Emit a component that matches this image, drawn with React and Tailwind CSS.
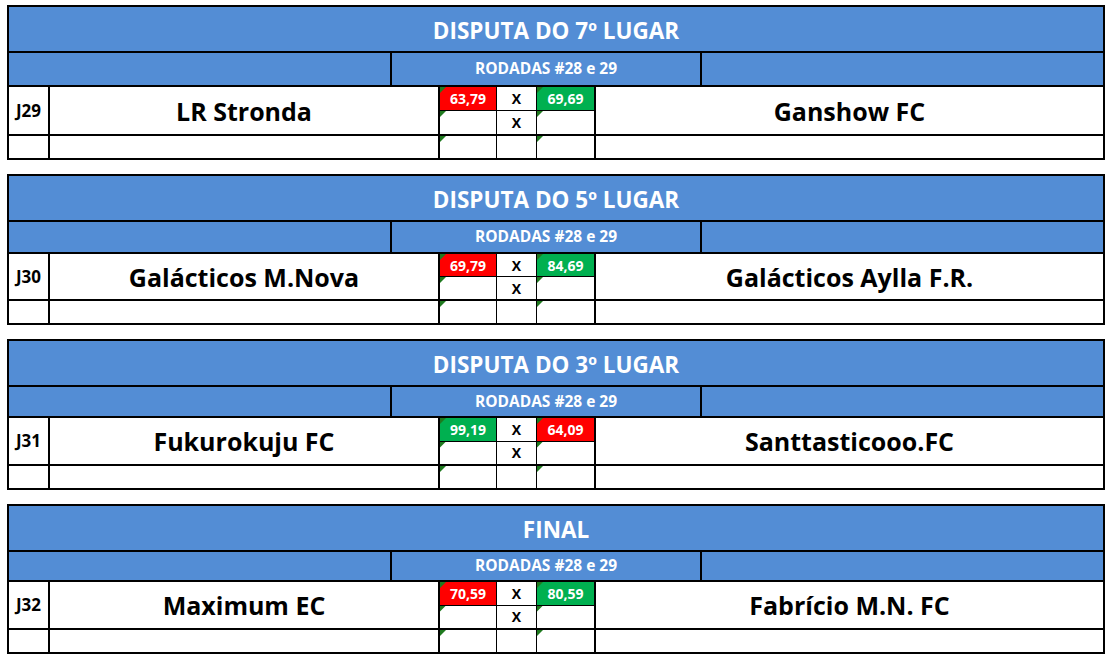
import React from "react";

const games = [
  { title: "DISPUTA DO 7º LUGAR", j: "J29", a: "LR Stronda", b: "Ganshow FC", sa: "63,79", sb: "69,69", aWin: false, rh: "h-[34px]", mh: "h-[49px]" },
  { title: "DISPUTA DO 5º LUGAR", j: "J30", a: "Galácticos M.Nova", b: "Galácticos Aylla F.R.", sa: "69,79", sb: "84,69", aWin: false, rh: "h-[32px]", mh: "h-[47px]" },
  { title: "DISPUTA DO 3º LUGAR", j: "J31", a: "Fukurokuju FC", b: "Santtasticooo.FC", sa: "99,19", sb: "64,09", aWin: true, rh: "h-[31px]", mh: "h-[48px]" },
  { title: "FINAL", j: "J32", a: "Maximum EC", b: "Fabrício M.N. FC", sa: "70,59", sb: "80,59", aWin: false, rh: "h-[30px]", mh: "h-[48px]" },
];

function Tri() {
  return (
    <span className="absolute left-0 top-0 w-[6px] h-[6px] bg-[#1f7a1f] [clip-path:polygon(0_0,100%_0,0_100%)]" />
  );
}

function ScoreCell({ children, color, bottom }) {
  return (
    <div
      className={`relative flex-1 flex items-center justify-center text-[14px] font-bold ${
        color ? `${color} text-white` : ""
      } ${bottom ? "" : "border-b border-black"}`}
    >
      <Tri />
      {children}
    </div>
  );
}

function Block({ g }) {
  const ca = g.aWin ? "bg-[#00b050]" : "bg-[#ff0000]";
  const cb = g.aWin ? "bg-[#ff0000]" : "bg-[#00b050]";
  return (
    <div className="w-[1098px] border-2 border-black flex flex-col">
      <div className="h-[46px] pt-[3px] bg-[#538dd5] flex items-center justify-center text-white font-bold text-[22.5px] border-b-2 border-black">
        {g.title}
      </div>
      <div className={`${g.rh} bg-[#538dd5] flex border-b-2 border-black`}>
        <div className="w-[383px] border-r-2 border-black" />
        <div className="w-[310px] border-r-2 border-black flex items-center justify-center text-white font-bold text-[15.5px]">
          RODADAS #28 e 29
        </div>
        <div className="flex-1" />
      </div>
      <div className={`${g.mh} flex border-b-2 border-black`}>
        <div className="w-[41px] border-r-2 border-black flex items-center justify-center font-bold text-[17px]">
          {g.j}
        </div>
        <div className="w-[390px] pt-[2px] border-r-2 border-black flex items-center justify-center font-bold text-[25px]">
          {g.a}
        </div>
        <div className="w-[57px] border-r border-black flex flex-col">
          <ScoreCell color={ca}>{g.sa}</ScoreCell>
          <ScoreCell bottom />
        </div>
        <div className="w-[40px] border-r border-black flex flex-col">
          <div className="flex-1 border-b border-black flex items-center justify-center font-bold text-[14px]">X</div>
          <div className="flex-1 flex items-center justify-center font-bold text-[14px]">X</div>
        </div>
        <div className="w-[59px] border-r-2 border-black flex flex-col">
          <ScoreCell color={cb}>{g.sb}</ScoreCell>
          <ScoreCell bottom />
        </div>
        <div className="flex-1 pt-[2px] flex items-center justify-center font-bold text-[25px]">{g.b}</div>
      </div>
      <div className="h-[22px] flex">
        <div className="w-[41px] border-r-2 border-black" />
        <div className="w-[390px] border-r-2 border-black" />
        <div className="relative w-[57px] border-r border-black">
          <Tri />
        </div>
        <div className="w-[40px] border-r border-black" />
        <div className="relative w-[59px] border-r-2 border-black">
          <Tri />
        </div>
        <div className="flex-1" />
      </div>
    </div>
  );
}

export default function App() {
  return (
    <div
      className="w-[1109px] h-[659px] bg-white pt-[5px] pl-[7px] flex flex-col gap-[14px] text-black"
      style={{ fontFamily: '"Open Sans", "Liberation Sans", sans-serif' }}
    >
      {games.map((g) => (
        <Block key={g.j} g={g} />
      ))}
    </div>
  );
}
